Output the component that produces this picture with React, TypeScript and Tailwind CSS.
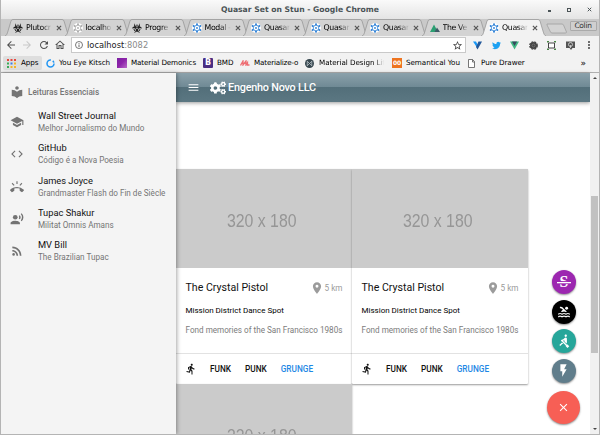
import type { ReactNode } from 'react';
import { FaBiohazard, FaCogs, FaTwitter } from 'react-icons/fa';
import {
  MdArrowBack,
  MdArrowForward,
  MdClose,
  MdCode,
  MdDirectionsRun,
  MdFlashOn,
  MdLocalLibrary,
  MdMenu,
  MdMoreVert,
  MdOutlineHome,
  MdPlace,
  MdPool,
  MdRecordVoiceOver,
  MdRefresh,
  MdRingVolume,
  MdRowing,
  MdRssFeed,
  MdSchool,
  MdStarBorder,
} from 'react-icons/md';

function QuasarMark({ color }: { color: string }) {
  return (
    <svg viewBox="0 0 20 20" className="size-[10px] shrink-0">
      <circle cx="10" cy="10" r="10" fill="#fff" />
      <g fill={color}>
        <circle cx="10" cy="2.5" r="2" />
        <circle cx="16.6" cy="6" r="2" />
        <circle cx="16.6" cy="14" r="2" />
        <circle cx="10" cy="17.5" r="2" />
        <circle cx="3.4" cy="14" r="2" />
        <circle cx="3.4" cy="6" r="2" />
        <circle cx="10" cy="10" r="1.8" />
      </g>
      <circle cx="10" cy="10" r="5.6" fill="none" stroke={color} strokeWidth="1.6" />
    </svg>
  );
}

function VuetifyPeak() {
  return (
    <svg viewBox="0 0 20 20" className="size-[10px] shrink-0">
      <path d="M0 18 8 3l8 15z" fill="#2c9f72" />
      <path d="M9 18l5-9 6 9z" fill="#3d5a66" />
    </svg>
  );
}

function Cross({ className }: { className: string }) {
  return (
    <svg viewBox="0 0 10 10" className={className}>
      <path d="M1.500 1.500l7 7M8.500 1.500l-7 7" fill="none" stroke="currentColor" strokeWidth="2" />
    </svg>
  );
}

type TabInfo = { title: string; icon: ReactNode; active?: boolean };

const blueMark = <QuasarMark color="#2b7fd6" />;
const hazard = <FaBiohazard className="size-[10px] shrink-0 text-[#222]" />;

const tabs: TabInfo[] = [
  { title: 'Plutocr', icon: hazard },
  { title: 'localho', icon: <QuasarMark color="#aaa" /> },
  { title: 'Progre', icon: hazard },
  { title: 'Modal -', icon: blueMark },
  { title: 'Quasar', icon: blueMark },
  { title: 'Quasar', icon: blueMark },
  { title: 'Quasar', icon: blueMark },
  { title: 'The Ve', icon: <VuetifyPeak /> },
  { title: 'Quasar', icon: blueMark, active: true },
];

function Tab({ title, icon, active }: TabInfo) {
  return (
    <div className="relative flex h-[17px] w-[59.5px] shrink-0 items-center pl-[8px]">
      <svg viewBox="0 0 66 17" className="absolute top-0 left-0 h-[17px] w-[66px]">
        <path
          d="M0 17C2 16 2 15 3 12L6 2Q6.500 .5 8 .5H57Q58.500 .5 59 2L62 12C63 15 63 16 65 17"
          fill={active ? '#f2f2f2' : '#d3d3d3'}
          stroke="#989898"
          strokeWidth=".8"
        />
      </svg>
      <span className="relative flex items-center">
        {icon}
        <span className="ml-[3px] w-[26px] mask-r-from-60% text-[7.800px] leading-[12px] tracking-[-0.350px] whitespace-nowrap text-black">
          {title}
        </span>
        <Cross className="ml-[4px] size-[6px] text-[#555]" />
      </span>
    </div>
  );
}

function Toolbar() {
  return (
    <div className="flex h-[18px] items-center bg-[#f2f2f2] pl-[4px] text-[#505050]">
      <MdArrowBack className="size-[12px]" />
      <MdArrowForward className="ml-[4px] size-[12px] text-[#c8c8c8]" />
      <MdRefresh className="ml-[5px] size-[12px]" />
      <MdOutlineHome className="ml-[4px] size-[12px]" />
      <div className="ml-[5px] flex h-[16px] w-[395px] items-center border border-[#c9c9c9] bg-white pl-[3px]">
        <svg viewBox="0 0 16 16" className="size-[8px]">
          <circle cx="8" cy="8" r="7" fill="none" stroke="#555" strokeWidth="1.6" />
          <path d="M8 7v5M8 4v1.600" stroke="#555" strokeWidth="1.800" />
        </svg>
        <span className="ml-[4px] text-[8.300px] leading-none text-[#222]">
          localhost<span className="text-[#8a8a8a]">:8082</span>
        </span>
        <MdStarBorder className="mr-[2px] ml-auto size-[11px] text-[#444]" />
      </div>
      <div className="ml-[7px] flex items-center gap-[9.500px]">
        <svg viewBox="0 0 18 18" className="size-[9px]">
          <path d="M0 1h6l4 8-2 4z" fill="#1697f6" />
          <path d="M11 1h7l-9 16-3-5z" fill="#23589a" />
        </svg>
        <FaTwitter className="size-[9px] text-[#1da1f2]" />
        <svg viewBox="0 0 18 16" className="size-[9px]">
          <path d="M0 0h18L9 16z" fill="#41b883" />
          <path d="M4 0h10L9 9z" fill="#35495e" />
        </svg>
        <svg viewBox="0 0 18 18" className="size-[9px]">
          <circle cx="9" cy="9" r="7" fill="#444" />
          <circle cx="9" cy="9" r="7.500" fill="none" stroke="#444" strokeWidth="2.500" strokeDasharray="4 2" />
          <circle cx="9" cy="9" r="3" fill="none" stroke="#999" />
        </svg>
        <svg viewBox="0 0 18 18" className="size-[9px]">
          <rect x="3" y="4" width="12" height="10" fill="#fff" stroke="#333" strokeWidth="1.800" />
          <path d="M0 4V1h4M14 1h4v3M18 14v3h-4M4 17H0v-3" fill="none" stroke="#3a7d35" strokeWidth="1.800" />
        </svg>
        <svg viewBox="0 0 18 18" className="size-[9px]">
          <path d="M0 1h18v13h-5l-3 4-3-4H0z" fill="#555" />
          <circle cx="9" cy="7" r="4" fill="none" stroke="#ddd" strokeWidth="1.600" />
          <path d="M9 8v6" stroke="#ddd" strokeWidth="1.600" />
        </svg>
      </div>
      <MdMoreVert className="ml-[8px] size-[12px]" />
    </div>
  );
}

function Bookmark({ icon, width, label }: { icon: ReactNode; width: string; label: string }) {
  return (
    <div className={`flex shrink-0 items-center gap-[4px] ${width}`}>
      {icon}
      <span>{label}</span>
    </div>
  );
}

function BookmarksBar() {
  return (
    <div className="flex h-[18px] items-center bg-[#f2f2f2] pl-[2px] text-[7.200px] leading-[12px] tracking-[-0.060px] whitespace-nowrap text-black">
      <div className="mr-[4px] flex h-[14px] w-[39px] shrink-0 items-center gap-[5px] rounded-[2px] bg-[#dedede] pl-[4px]">
        <svg viewBox="0 0 9 9" className="size-[9px] shrink-0">
          <path d="M0 1h2M3.500 1h2M7 1h2" stroke="#e8453c" strokeWidth="2" />
          <path d="M0 4.500h2" stroke="#3cab5a" strokeWidth="2" />
          <path d="M3.500 4.500h2" stroke="#3b7ded" strokeWidth="2" />
          <path d="M7 4.500h2" stroke="#f3b32a" strokeWidth="2" />
          <path d="M0 8h2" stroke="#3cab5a" strokeWidth="2" />
          <path d="M3.500 8h5.500" stroke="#f3b32a" strokeWidth="2" strokeDasharray="2 1.500" />
        </svg>
        Apps
      </div>
      <Bookmark
        width="w-[71px]"
        label="You Eye Kitsch"
        icon={
          <svg viewBox="0 0 18 18" className="size-[9px] shrink-0">
            <circle cx="9" cy="9" r="7" fill="none" stroke="#2296f3" strokeWidth="3" strokeDasharray="33 4 4 3" />
          </svg>
        }
      />
      <Bookmark
        width="w-[86px] tracking-[-0.120px]"
        label="Material Demonics"
        icon={<span className="size-[10px] shrink-0 bg-linear-to-br from-[#7b1fa2] via-[#8e24aa] to-[#ba68c8]" />}
      />
      <Bookmark
        width="w-[37px]"
        label="BMD"
        icon={
          <span className="grid size-[10px] shrink-0 place-items-center rounded-[1px] bg-[#4b2e83] text-[8px] leading-none font-bold text-white">
            B
          </span>
        }
      />
      <Bookmark
        width="w-[65px] tracking-[-0.180px]"
        label="Materialize-o"
        icon={
          <svg viewBox="0 0 20 12" className="h-[6px] w-[10px] shrink-0">
            <path d="M1 11 6 2v8l6-8v8l3-5v5h4" fill="none" stroke="#ee6e73" strokeWidth="2.600" />
          </svg>
        }
      />
      <Bookmark
        width="w-[79px] mask-r-from-88%"
        label="Material Design Lite"
        icon={
          <svg viewBox="0 0 20 20" className="mr-[1px] size-[9px] shrink-0">
            <circle cx="10" cy="10" r="10" fill="#37474f" />
            <path d="M5 15V5l5 5 5-5v10L10 10z" fill="none" stroke="#cfd8dc" strokeWidth="1.500" />
          </svg>
        }
      />
      <Bookmark
        width="ml-[8px] w-[76px]"
        label="Semantical You"
        icon={
          <span className="grid size-[10px] shrink-0 place-items-center bg-[#ee7420] text-[6px] leading-none font-bold text-white">
            00
          </span>
        }
      />
      <Bookmark
        width="w-[60px]"
        label="Pure Drawer"
        icon={
          <svg viewBox="0 0 14 18" className="mr-[2px] h-[9px] w-[7px] shrink-0">
            <path d="M1 1h8l4 4v12H1zM9 1v5h4" fill="#fff" stroke="#555" strokeWidth="1.600" />
          </svg>
        }
      />
      <span className="mr-[13px] ml-auto text-[9px]">»</span>
    </div>
  );
}

const readings = [
  { icon: MdSchool, title: 'Wall Street Journal', note: 'Melhor Jornalismo do Mundo' },
  { icon: MdCode, title: 'GitHub', note: 'Código é a Nova Poesia' },
  { icon: MdRingVolume, title: 'James Joyce', note: 'Grandmaster Flash do Fin de Siècle' },
  { icon: MdRecordVoiceOver, title: 'Tupac Shakur', note: 'Militat Omnis Amans' },
  { icon: MdRssFeed, title: 'MV Bill', note: 'The Brazilian Tupac' },
];

function Sidebar() {
  return (
    <aside className="z-10 w-[175px] shrink-0 bg-[#f4f4f4] pt-[5px] shadow-[1px_0_4px_rgba(0,0,0,0.35)]">
      <div className="flex h-[28px] items-center gap-[4px] pl-[9px] text-[8.250px] font-medium text-[#757575]">
        <MdLocalLibrary className="size-[14px]" />
        Leituras Essenciais
      </div>
      {readings.map(({ icon: Icon, title, note }) => (
        <div key={title} className="flex h-[32.300px] items-center pl-[9px]">
          <Icon className="size-[14px] text-[#737373]" />
          <div className="ml-[14px] whitespace-nowrap">
            <div className="text-[9.300px] leading-[12px] text-[#111]">{title}</div>
            <div className="text-[8.150px] leading-[12px] text-[#757575]">{note}</div>
          </div>
        </div>
      ))}
    </aside>
  );
}

function VenueCard() {
  return (
    <article className="h-[215px] w-[176px] rounded-[1px] bg-white shadow-[0_1px_2px_rgba(0,0,0,0.4)]">
      <div className="grid h-[99px] place-items-center bg-[#cbcbcb] pt-[5px] pr-[4px] font-['Liberation_Sans'] text-[19px] text-[#969696]">
        <span className="scale-x-[0.835]">320 x 180</span>
      </div>
      <div className="h-[86px] border-b border-[#e2e2e2] px-[9.500px] pt-[13px]">
        <div className="flex items-center justify-between">
          <h2 className="text-[10.600px] leading-[14px] text-[#111]">The Crystal Pistol</h2>
          <span className="flex items-center gap-[1px] text-[8.200px] text-[#9b9b9b]">
            <MdPlace className="size-[14px]" />5 km
          </span>
        </div>
        <p className="mt-[10px] text-[8px] leading-[12px] text-black">Mission District Dance Spot</p>
        <p className="mt-[7px] text-[8.150px] leading-[12px] whitespace-nowrap text-[#7c7c7c]">
          Fond memories of the San Francisco 1980s
        </p>
      </div>
      <div className="flex h-[30px] items-center pl-[8.500px] text-[8.250px] font-medium text-[#111]">
        <MdDirectionsRun className="size-[12px]" />
        <span className="ml-[13.500px]">FUNK</span>
        <span className="ml-[14px]">PUNK</span>
        <span className="ml-[14px] text-[#1e88e5]">GRUNGE</span>
      </div>
    </article>
  );
}

function Fab({ className, children }: { className: string; children: ReactNode }) {
  return (
    <button
      className={`grid place-items-center rounded-full text-white shadow-[0_1px_2px_rgba(0,0,0,0.45)] ${className}`}
    >
      {children}
    </button>
  );
}

export default function App() {
  return (
    <div className="relative flex h-[435px] w-[600px] flex-col overflow-hidden border-x border-b border-[#b4b4b4] bg-white font-['DejaVu_Sans',sans-serif]">
      <div className="flex h-[19px] shrink-0 items-center bg-linear-to-b from-[#fafafa] to-[#e4e4e4]">
        <div className="w-[150px]" />
        <div className="flex-1 text-center text-[7.650px] font-bold whitespace-nowrap text-[#4a5356]">
          Quasar Set on Stun - Google Chrome
        </div>
        <div className="flex w-[150px] items-center justify-end pr-[7px] text-[#4a5356]">
          <span className="mt-[3px] mr-[16px] h-[1.500px] w-[3px] bg-[#4a5356]" />
          <span className="mr-[16px] size-[4px] border border-[#4a5356]" />
          <Cross className="size-[5px]" />
        </div>
      </div>

      <div className="flex h-[17px] shrink-0 bg-[#c9c9c9] pl-[4px]">
        {tabs.map((tab, i) => (
          <Tab key={i} {...tab} />
        ))}
        <svg viewBox="0 0 22 17" className="ml-[5px] h-[17px] w-[22px] shrink-0">
          <path d="M1 5h15q1 0 1.500 1l3 7q0 1-1 1H6q-1 0-1.500-1L1 6z" fill="#d3d3d3" stroke="#a0a0a0" strokeWidth=".8" />
        </svg>
        <div className="mt-[2px] ml-[2px] grid h-[10px] w-[27px] place-items-center rounded-[1px] border border-[#aaa] bg-[#cfcfcf] text-[7.500px] leading-none tracking-[-0.300px] text-[#333]">
          Colin
        </div>
      </div>

      <Toolbar />
      <BookmarksBar />

      <div className="flex min-h-0 flex-1 border-t border-[#b0b0b0] font-['Roboto',sans-serif]">
        <Sidebar />
        <div className="flex w-[414px] shrink-0 flex-col">
          <header className="flex h-[29px] shrink-0 items-center bg-[linear-gradient(to_bottom,#8ba1ab_0%,#6f8994_49%,#536f7a_50%,#5b7782_100%)] pl-[10.500px] text-white shadow-[0_1px_4px_rgba(0,0,0,0.4)]">
            <MdMenu className="size-[13px]" />
            <FaCogs className="ml-[10.500px] size-[16px]" />
            <h1 className="mt-[2px] ml-[2px] text-[10.800px] font-medium tracking-[-0.200px] whitespace-nowrap">
              Engenho Novo LLC
            </h1>
          </header>
          <main className="mt-[67px] grid grid-cols-[176px_176px]">
            <VenueCard />
            <VenueCard />
            <VenueCard />
          </main>
        </div>
        <div className="flex w-[9px] flex-col items-center justify-between bg-[#f1f1f1] py-[4px]">
          <span className="border-x-[2px] border-b-[2px] border-x-transparent border-b-[#444]" />
          <span className="mt-[-8px] h-[157px] w-[7px] translate-y-[25px] bg-[#c1c1c1]" />
          <span className="border-x-[2px] border-t-[2px] border-x-transparent border-t-[#444]" />
        </div>
      </div>

      <div className="absolute right-[19px] bottom-[10px] flex w-[33px] flex-col items-center gap-[5.500px]">
        <Fab className="size-[24px] bg-[#9c27b0]">
          <svg viewBox="0 0 16 16" className="size-[16px]">
            <text
              x="8"
              y="13.2"
              textAnchor="middle"
              fill="#fff"
              className="font-['Liberation_Serif'] text-[16px] font-bold"
            >
              S
            </text>
            <path d="M1 7.100h14v3H1z" fill="#9c27b0" />
            <path d="M1 8h14v1.300H1z" fill="#fff" />
          </svg>
        </Fab>
        <Fab className="size-[24px] bg-black">
          <MdPool className="size-[14px]" />
        </Fab>
        <Fab className="size-[24px] bg-[#26a69a]">
          <MdRowing className="size-[14px]" />
        </Fab>
        <Fab className="mb-[3px] size-[24px] bg-[#607d8b]">
          <MdFlashOn className="size-[15px]" />
        </Fab>
        <Fab className="size-[33px] bg-[#f75f55]">
          <MdClose className="size-[13px]" />
        </Fab>
      </div>
    </div>
  );
}
